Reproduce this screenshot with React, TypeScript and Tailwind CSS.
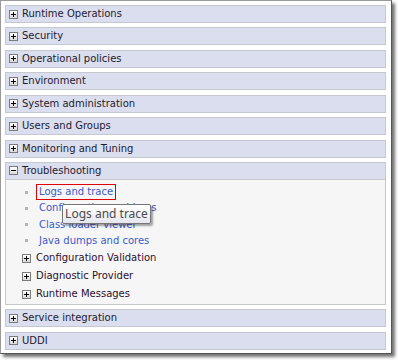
import React from "react";

const PlusBox = ({ minus = false }: { minus?: boolean }) => (
  <span className="inline-flex w-[9px] h-[9px] border border-[#7b7b7b] bg-gradient-to-b from-white to-[#d9d9d9] items-center justify-center shrink-0 relative">
    <span className="absolute left-[1px] top-[3px] w-[5px] h-[1px] bg-black" />
    {!minus && <span className="absolute left-[3px] top-[1px] w-[1px] h-[5px] bg-black" />}
  </span>
);

const Header = ({ title, minus = false, last = false }: { title: string; minus?: boolean; last?: boolean }) => (
  <div className={`h-[18px] border border-[#c6c8d0] bg-[#dbdeef] flex items-center pl-[3px] gap-[4px] text-[#1d1b2e] ${last ? "" : ""}`}>
    <PlusBox minus={minus} />
    <span className="leading-none">{title}</span>
  </div>
);

export default function App() {
  const top = [
    "Runtime Operations",
    "Security",
    "Operational policies",
    "Environment",
    "System administration",
    "Users and Groups",
    "Monitoring and Tuning",
  ];
  return (
    <div className="w-[398px] h-[362px] bg-white" style={{ fontFamily: '"DejaVu Sans", Verdana, sans-serif' }}>
      <div className="relative w-[392px] h-[354px] border border-[#9a9a9a] border-r-[#555] border-b-[#555] bg-white pl-[4px] pr-[5px] pt-[4px] text-[10px] shadow-[3px_3px_3px_rgba(0,0,0,0.55)]">
        <div className="flex flex-col gap-[4.43px]">
          {top.map((t) => (
            <Header key={t} title={t} />
          ))}
          <div>
            <Header title="Troubleshooting" minus />
            <div className="border border-t-0 border-[#c8c8c8] bg-[#f6f6f6] pt-[4px] pb-[3px] h-[125px]">
              {["Logs and trace", "Configuration problems", "Class loader viewer", "Java dumps and cores"].map((l, i) => (
                <div key={l} className="h-[16.3px] flex items-center pl-[19px]">
                  <span className="w-[3px] h-[3px] bg-[#b4b4b4] mr-[10px]" />
                  <span
                    className={`text-[#3a5acb] leading-none ${i === 0 ? "outline outline-1 outline-[#e00000] outline-offset-[2px] ml-[1px]" : "ml-[1px]"}`}
                  >
                    {l}
                  </span>
                </div>
              ))}
              {["Configuration Validation", "Diagnostic Provider", "Runtime Messages"].map((l) => (
                <div key={l} className="h-[18px] flex items-center pl-[16px] gap-[5px] text-[#2c1030]">
                  <PlusBox />
                  <span className="leading-none">{l}</span>
                </div>
              ))}
            </div>
          </div>
          <Header title="Service integration" />
          <Header title="UDDI" />
        </div>
        <div
          className="absolute left-[61px] top-[203px] w-[89px] h-[20px] border border-[#767676] rounded-[2px] bg-gradient-to-b from-white to-[#e6e7ef] flex items-center justify-center text-[12px] text-[#4a4a4a] shadow-[2px_2px_2px_rgba(0,0,0,0.35)]"
          style={{ fontFamily: '"Noto Sans", "Open Sans", sans-serif' }}
        >
          Logs and trace
        </div>
      </div>
    </div>
  );
}
